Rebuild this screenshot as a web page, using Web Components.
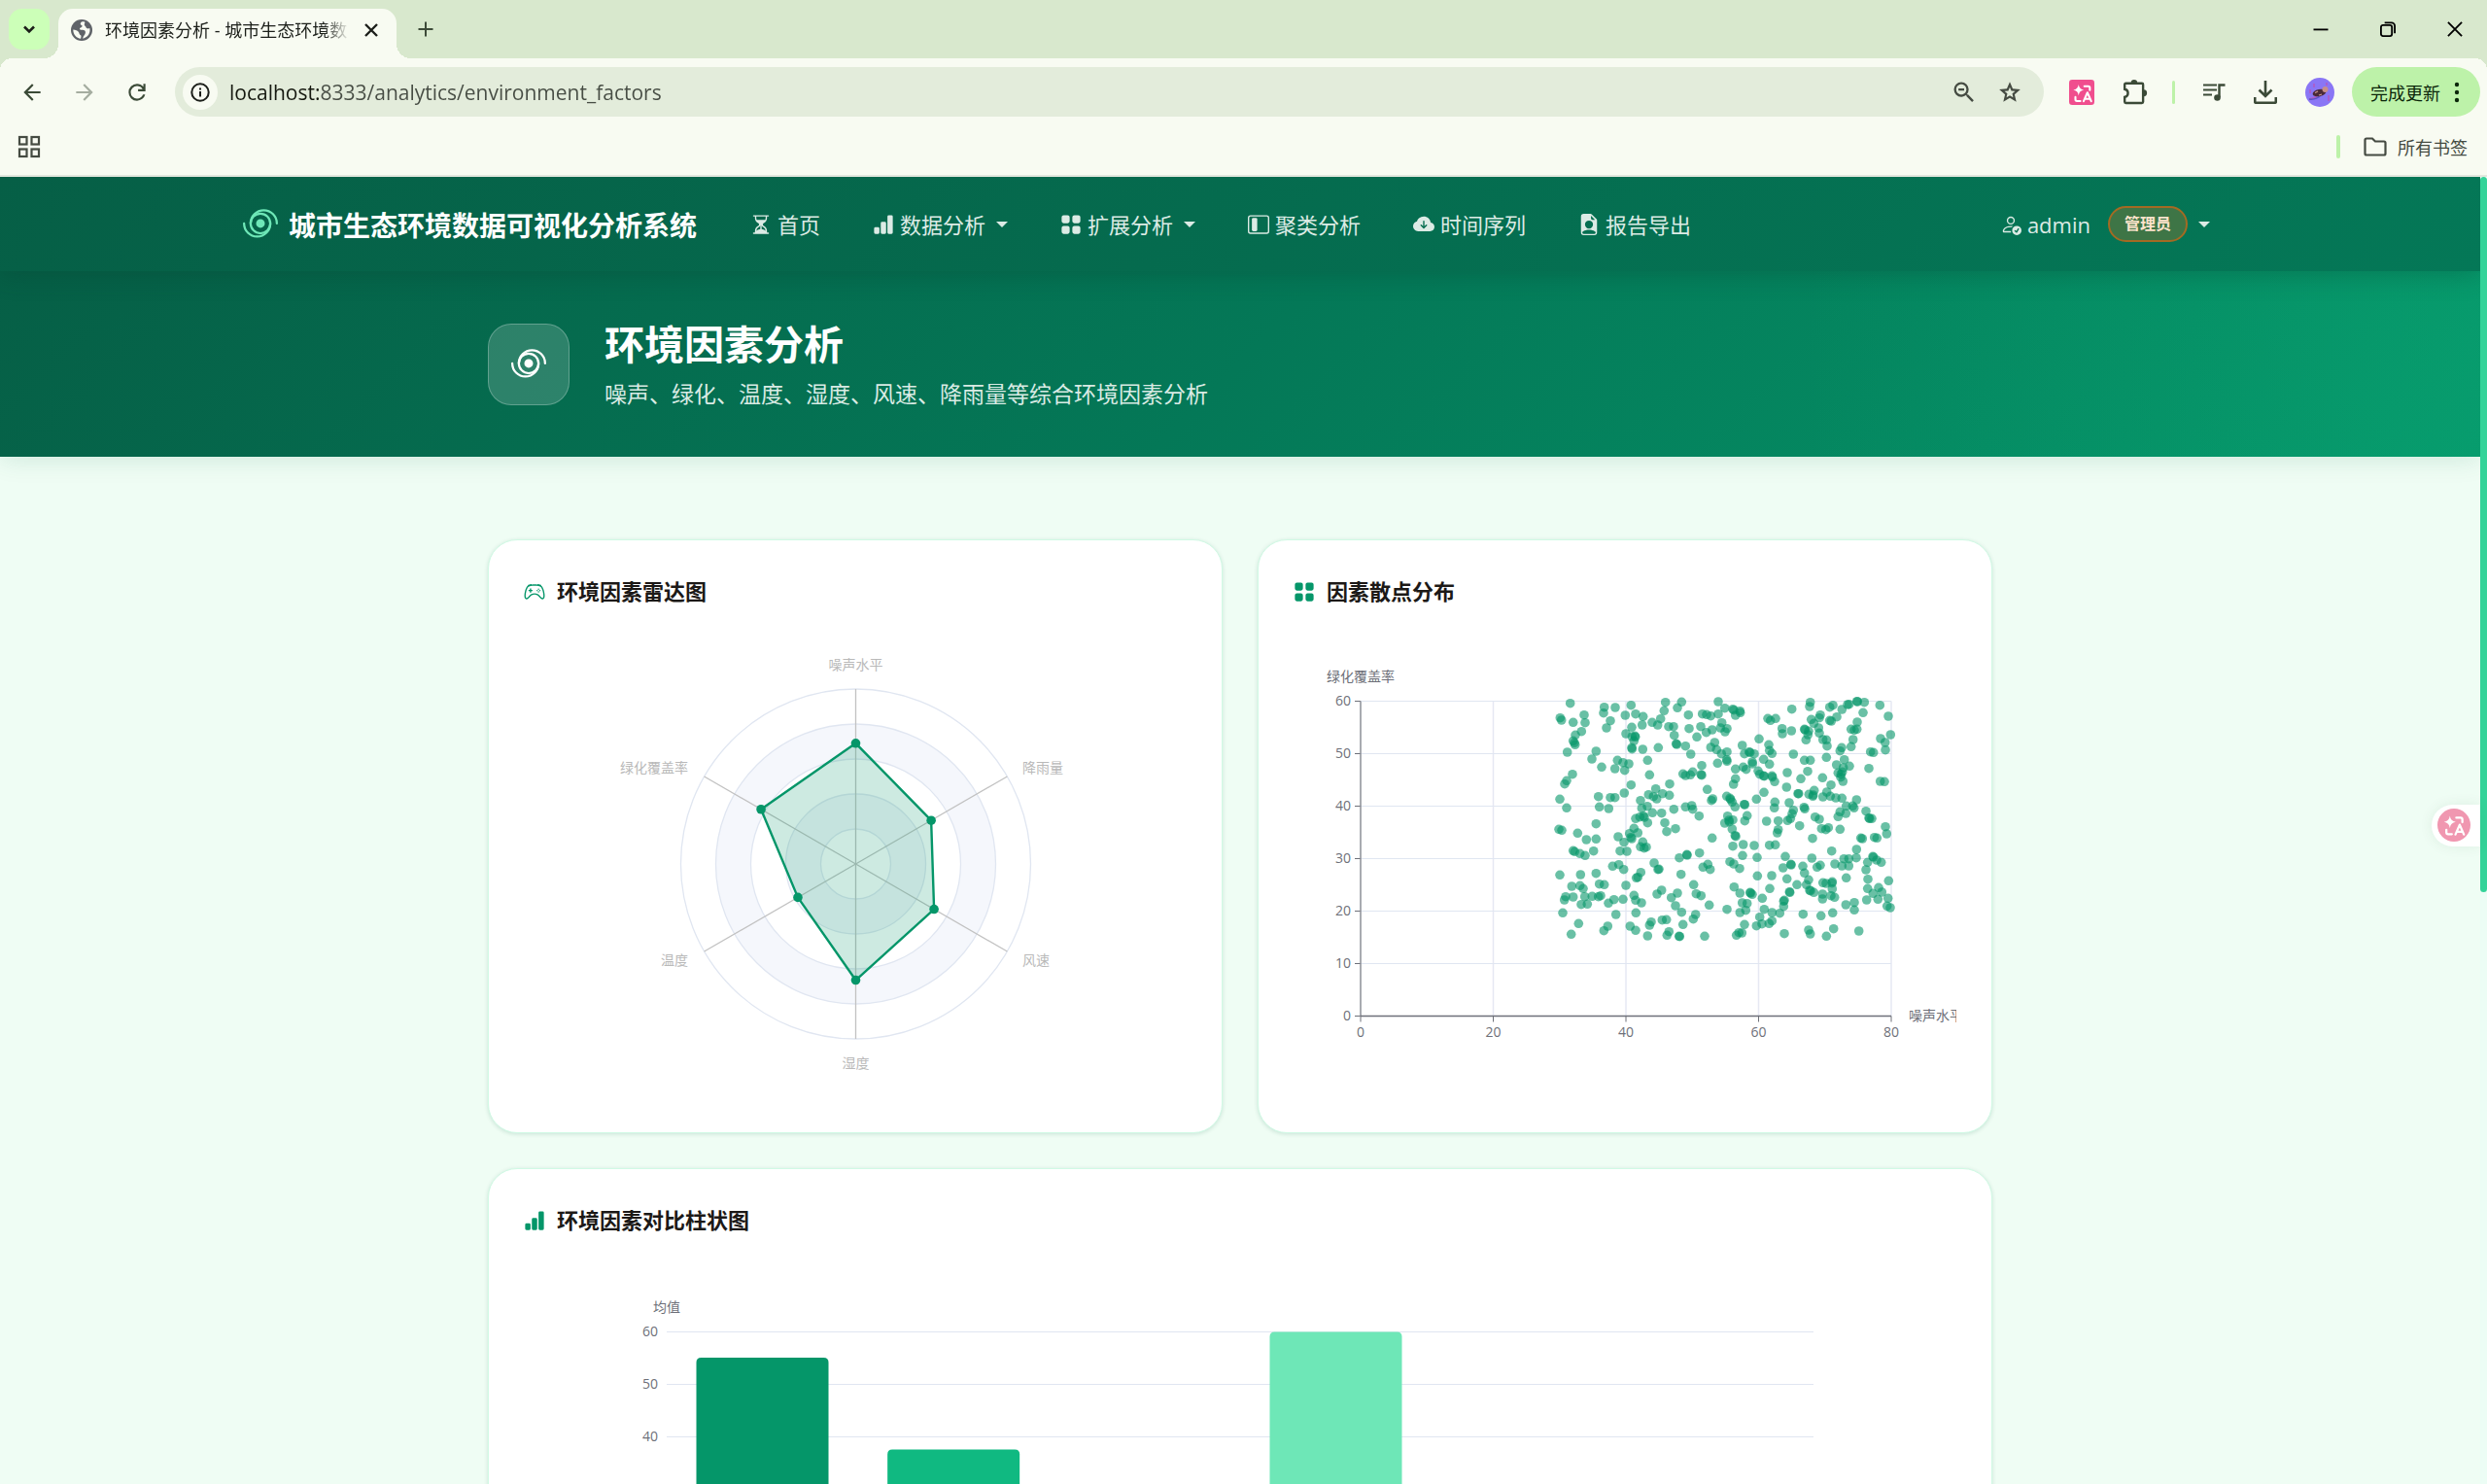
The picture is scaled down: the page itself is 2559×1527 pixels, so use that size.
<!DOCTYPE html>
<html lang="zh-CN">
<head>
<meta charset="utf-8">
<title>环境因素分析 - 城市生态环境数据可视化分析系统</title>
<style>
html,body{margin:0;height:100%}
body{font-family:"Open Sans","Noto Sans CJK SC",sans-serif;overflow:hidden;background:#f8fbf2}
</style>
</head>
<body>
<browser-window>
  <tab-strip slot="chrome"></tab-strip>
  <tool-bar slot="chrome"></tool-bar>
  <bookmark-bar slot="chrome"></bookmark-bar>

  <site-nav brand="城市生态环境数据可视化分析系统">
    <nav-item icon="hourglass">首页</nav-item>
    <nav-item icon="bars" menu>数据分析</nav-item>
    <nav-item icon="grid" menu>扩展分析</nav-item>
    <nav-item icon="sidebar">聚类分析</nav-item>
    <nav-item icon="cloud">时间序列</nav-item>
    <nav-item icon="report">报告导出</nav-item>
    <user-menu slot="user" role-name="管理员">admin</user-menu>
  </site-nav>
  <page-hero icon="hurricane">
    <span slot="title">环境因素分析</span>
    噪声、绿化、温度、湿度、风速、降雨量等综合环境因素分析
  </page-hero>
  <card-grid>
    <chart-card icon="controller"><span slot="title">环境因素雷达图</span><radar-chart></radar-chart></chart-card>
    <chart-card icon="grid"><span slot="title">因素散点分布</span><scatter-chart></scatter-chart></chart-card>
    <chart-card icon="bars" wide><span slot="title">环境因素对比柱状图</span><bar-chart></bar-chart></chart-card>
  </card-grid>
</browser-window>

<script>
const bi = d => `<svg viewBox="0 0 16 16" fill="currentColor">${d.map(p => `<path d="${p}"/>`).join('')}</svg>`;
const md = (d) => `<svg viewBox="0 0 24 24" fill="currentColor"><path d="${d}"/></svg>`;
const line = (inner, w = 2, box = 24) => `<svg viewBox="0 0 ${box} ${box}" fill="none" stroke="currentColor" stroke-width="${w}">${inner}</svg>`;
const translateMark = `<path d="M9 4.5Q9.6 9 14 9.800Q9.600 10.600 9 15Q8.400 10.600 4 9.800Q8.400 9 9 4.500Z" fill="#fff"/><g fill="none" stroke="#fff" stroke-width="1.900" stroke-linecap="round" stroke-linejoin="round"><path d="M14.500 6.200h3.700a1.500 1.500 0 0 1 1.500 1.500v2.300M6 16.500v2.300a1.500 1.500 0 0 0 1.500 1.500h3.200M13.800 20.500l3.600-8.300 3.600 8.300M15 18.300h4.800"/></g>`;
const ICONS = {
  hurricane: `<svg viewBox="0 0 16 16" fill="none" stroke="currentColor" stroke-linecap="round"><circle cx="8" cy="7.500" r="4.500"/><path d="M3.500 7.500a6 6 0 0 1 12 0M12.500 7.500a6 6 0 0 1-12 0"/><circle cx="8" cy="7.500" r="2" fill="currentColor" stroke="none"/></svg>`,
  hourglass: bi(['M2.5 15a.5.5 0 1 1 0-1h1v-1a4.5 4.5 0 0 1 2.557-4.06c.29-.139.443-.377.443-.59v-.7c0-.213-.154-.451-.443-.59A4.5 4.5 0 0 1 3.5 3V2h-1a.5.5 0 0 1 0-1h11a.5.5 0 0 1 0 1h-1v1a4.5 4.5 0 0 1-2.557 4.06c-.29.139-.443.377-.443.59v.7c0 .213.154.451.443.59A4.5 4.5 0 0 1 12.5 13v1h1a.5.5 0 0 1 0 1zm2-13v1c0 .537.12 1.045.337 1.5h6.326c.216-.455.337-.963.337-1.5V2zm3 6.35c0 .701-.478 1.236-1.011 1.492A3.5 3.5 0 0 0 4.5 13s.866-1.299 3-1.48zm1 0v3.17c2.134.181 3 1.48 3 1.48a3.5 3.5 0 0 0-1.989-3.158C8.978 9.586 8.5 9.052 8.5 8.351z']),
  bars: bi(['M1 11a1 1 0 0 1 1-1h2a1 1 0 0 1 1 1v3a1 1 0 0 1-1 1H2a1 1 0 0 1-1-1zm5-4a1 1 0 0 1 1-1h2a1 1 0 0 1 1 1v7a1 1 0 0 1-1 1H7a1 1 0 0 1-1-1zm5-5a1 1 0 0 1 1-1h2a1 1 0 0 1 1 1v12a1 1 0 0 1-1 1h-2a1 1 0 0 1-1-1z']),
  grid: bi(['M1 2.5A1.5 1.5 0 0 1 2.5 1h3A1.5 1.5 0 0 1 7 2.5v3A1.5 1.5 0 0 1 5.5 7h-3A1.5 1.5 0 0 1 1 5.5zm8 0A1.5 1.5 0 0 1 10.5 1h3A1.5 1.5 0 0 1 15 2.5v3A1.5 1.5 0 0 1 13.5 7h-3A1.5 1.5 0 0 1 9 5.5zm-8 8A1.5 1.5 0 0 1 2.5 9h3A1.5 1.5 0 0 1 7 10.5v3A1.5 1.5 0 0 1 5.5 15h-3A1.5 1.5 0 0 1 1 13.5zm8 0A1.5 1.5 0 0 1 10.5 9h3a1.5 1.5 0 0 1 1.5 1.5v3a1.5 1.5 0 0 1-1.5 1.5h-3A1.5 1.5 0 0 1 9 13.5z']),
  sidebar: bi(['M14 2a1 1 0 0 1 1 1v10a1 1 0 0 1-1 1H2a1 1 0 0 1-1-1V3a1 1 0 0 1 1-1zM2 1a2 2 0 0 0-2 2v10a2 2 0 0 0 2 2h12a2 2 0 0 0 2-2V3a2 2 0 0 0-2-2z', 'M3 4a1 1 0 0 1 1-1h2a1 1 0 0 1 1 1v8a1 1 0 0 1-1 1H4a1 1 0 0 1-1-1z']),
  cloud: bi(['M8 2a5.53 5.53 0 0 0-3.594 1.342c-.766.66-1.321 1.52-1.464 2.383C1.266 6.095 0 7.555 0 9.318 0 11.366 1.708 13 3.781 13h8.906C14.502 13 16 11.57 16 9.773c0-1.636-1.242-2.969-2.834-3.194C12.923 3.999 10.69 2 8 2m2.354 6.854-2 2a.5.5 0 0 1-.708 0l-2-2a.5.5 0 1 1 .708-.708L7.5 9.293V5.5a.5.5 0 0 1 1 0v3.793l1.146-1.147a.5.5 0 0 1 .708.708']),
  report: bi(['M9.293 0H4a2 2 0 0 0-2 2v12a2 2 0 0 0 2 2h8a2 2 0 0 0 2-2V4.707A1 1 0 0 0 13.707 4L10 .293A1 1 0 0 0 9.293 0M9.5 3.5v-2l3 3h-2a1 1 0 0 1-1-1M11 8a3 3 0 1 1-6 0 3 3 0 0 1 6 0m2 5.755V14a1 1 0 0 1-1 1H4a1 1 0 0 1-1-1v-.245S4 12 8 12s5 1.755 5 1.755']),
  person: bi(['M12.5 16a3.5 3.5 0 1 0 0-7 3.5 3.5 0 0 0 0 7m1.679-4.493-1.335 2.226a.75.75 0 0 1-1.174.144l-.774-.773a.5.5 0 0 1 .708-.708l.547.548 1.17-1.951a.5.5 0 1 1 .858.514M11 5a3 3 0 1 1-6 0 3 3 0 0 1 6 0M8 7a2 2 0 1 0 0-4 2 2 0 0 0 0 4', 'M8.256 14a4.5 4.5 0 0 1-.229-1.004H3c.001-.246.154-.986.832-1.664C4.484 10.68 5.711 10 8 10q.39 0 .74.025c.226-.341.496-.65.804-.918Q8.844 9.002 8 9c-5 0-6 3-6 4s1 1 1 1z']),
  controller: bi(['M11.5 6.027a.5.5 0 1 1-1 0 .5.5 0 0 1 1 0m-1.5 1.5a.5.5 0 1 0 0-1 .5.5 0 0 0 0 1m2.5-.5a.5.5 0 1 1-1 0 .5.5 0 0 1 1 0m-1.5 1.5a.5.5 0 1 0 0-1 .5.5 0 0 0 0 1m-6.5-3h1v1h1v1h-1v1h-1v-1h-1v-1h1z', 'M3.051 3.26a.5.5 0 0 1 .354-.613l1.932-.518a.5.5 0 0 1 .62.39c.655-.079 1.35-.117 2.043-.117.72 0 1.443.041 2.12.126a.5.5 0 0 1 .622-.399l1.932.518a.5.5 0 0 1 .306.729q.211.136.373.297c.408.408.78 1.05 1.095 1.772.32.733.599 1.591.805 2.466s.34 1.78.364 2.606c.024.816-.059 1.602-.328 2.21a1.42 1.42 0 0 1-1.445.83c-.636-.067-1.115-.394-1.513-.773-.245-.232-.496-.526-.739-.808-.126-.148-.25-.292-.368-.423-.728-.804-1.597-1.527-3.224-1.527s-2.496.723-3.224 1.527c-.119.131-.242.275-.368.423-.243.282-.494.575-.739.808-.398.38-.877.706-1.513.773a1.42 1.42 0 0 1-1.445-.83c-.27-.608-.352-1.395-.329-2.21.024-.826.16-1.73.365-2.606.206-.875.486-1.733.805-2.466.315-.722.687-1.364 1.094-1.772a2.3 2.3 0 0 1 .433-.335zm2.036.412c-.877.185-1.469.443-1.733.708-.276.276-.587.783-.885 1.465a14 14 0 0 0-.748 2.295 12.4 12.4 0 0 0-.339 2.406c-.022.755.062 1.368.243 1.776a.42.42 0 0 0 .426.24c.327-.034.61-.199.929-.502.212-.202.4-.423.615-.674.133-.156.276-.323.44-.504C4.861 9.969 5.978 9.027 8 9.027s3.139.942 3.965 1.855c.164.181.307.348.44.504.214.251.403.472.615.674.318.303.601.468.929.503a.42.42 0 0 0 .426-.241c.18-.408.265-1.02.243-1.776a12.4 12.4 0 0 0-.339-2.406 14 14 0 0 0-.748-2.295c-.298-.682-.61-1.19-.885-1.465-.264-.265-.856-.523-1.733-.708-.85-.179-1.877-.27-2.913-.27s-2.063.091-2.913.27']),
  chevron: line('<path d="M7 9.500l5 5 5-5"/>', 2.6),
  globe: `<svg viewBox="0 0 24 24"><circle cx="12" cy="12" r="11" fill="#5f6368"/><path fill="#f8fbf2" d="M12.500 3.200c-2 1-2.300 2.800-1 3.600 1.800.4 1.200 2.200-.5 2.600-1.800.6-1 2.600 1.200 2.300 3-.2 4.400 1.400 3.500 3.800-.6 1.800-2.200 2.600-2.500 5.200 4-.6 7.300-4.200 7.300-8.600 0-.8-.1-1.400-.3-2.100-1.400.8-3.200.6-3.700-1-.4-1.600-1.500-1-1.700-2.600-.1-1.400 1-2 .4-2.900-.8-.3-1.700-.4-2.700-.3zM3.300 11.500c2.200.3 4.700.8 5.800 2.800.6 1.300.6 2.400 1.900 2.900.9.500.4 2.200.1 3.500-4.500-.4-7.900-4.300-7.800-9.200z"/></svg>`,
  close: line('<path d="M6 6l12 12M18 6L6 18"/>', 2.4),
  plus: line('<path d="M12 3v18M3 12h18"/>', 2.4),
  min: line('<path d="M3 12.500h18"/>', 2.2),
  restore: line('<rect x="3.500" y="7" width="13.500" height="13.500" rx="2.500"/><path d="M8 4h8.500a4 4 0 0 1 4 4V17"/>', 2.2),
  shut: line('<path d="M3.500 3.500l17 17M20.500 3.500l-17 17"/>', 2.2),
  back: md('M20 11H7.830l5.590-5.590L12 4l-8 8 8 8 1.410-1.410L7.830 13H20z'),
  forward: md('M4 11h12.170l-5.590-5.590L12 4l8 8-8 8-1.410-1.410L16.170 13H4z'),
  reload: md('M12 20q-3.350 0-5.675-2.325T4 12t2.325-5.675T12 4q1.725 0 3.300.713T18 6.750V4h2v7h-7V9h4.200q-.8-1.400-2.188-2.200T12 6Q9.500 6 7.750 7.750T6 12t1.750 4.250T12 18q1.925 0 3.475-1.100T17.650 14h2.100q-.7 2.650-2.850 4.325T12 20'),
  info: line('<circle cx="12" cy="12" r="9.500"/><path d="M12 11v6M12 7v2.200"/>', 2.2),
  zoomout: md('M15.5 14h-.79l-.28-.27A6.47 6.47 0 0 0 16 9.5 6.5 6.5 0 1 0 9.5 16c1.61 0 3.09-.59 4.23-1.57l.27.28v.79l5 4.990L20.490 19zm-6 0C7.010 14 5 11.990 5 9.500S7.010 5 9.500 5 14 7.010 14 9.500 11.990 14 9.500 14M7 8.600h5v1.800H7z'),
  star: md('m8.850 16.825 3.150-1.900 3.150 1.925-.825-3.600 2.775-2.400-3.650-.325-1.450-3.400-1.450 3.375-3.650.325 2.775 2.425zM5.825 21l1.625-7.025L2 9.250l7.200-.625L12 2l2.800 6.625 7.200.625-5.450 4.725L18.175 21 12 17.275z'),
  puzzle: `<svg viewBox="0 0 24 24"><path d="M3 3.500h15.500a1 1 0 0 1 1 1V21a1.200 1.200 0 0 1-1.200 1.200H3.200A1.200 1.200 0 0 1 2 21v-4.500c4.200-.7 4.200-6.800 0-7.500V4.500a1 1 0 0 1 1-1z" fill="none" stroke="currentColor" stroke-width="2.200"/><path d="M8 3a3 3 0 0 1 6 0zM20 9.500a3.200 3.200 0 0 1 0 6.400z" fill="currentColor"/></svg>`,
  playlist: `<svg viewBox="0 0 24 24"><path d="M1 4.500h14M1 9.500h14M1 14.500h9" stroke="currentColor" stroke-width="2.200"/><path d="M17.500 17V4.500h6" stroke="currentColor" stroke-width="2.400" fill="none"/><circle cx="15.500" cy="17.500" r="3.300" fill="currentColor"/></svg>`,
  download: line('<path d="M12 0v15M5.500 9.500L12 16l6.500-6.500M1.200 17v4.500a1.300 1.300 0 0 0 1.300 1.300h19a1.300 1.300 0 0 0 1.300-1.300V17"/>', 2.6),
  dots: `<svg viewBox="0 0 24 24" fill="currentColor"><circle cx="12" cy="4" r="2.200"/><circle cx="12" cy="12" r="2.200"/><circle cx="12" cy="20" r="2.200"/></svg>`,
  apps: line('<rect x="2" y="2" width="7.500" height="7.500"/><rect x="14.500" y="2" width="7.500" height="7.500"/><rect x="2" y="14.500" width="7.500" height="7.500"/><rect x="14.500" y="14.500" width="7.500" height="7.500"/>', 2.200),
  folder: line('<path d="M1.500 19V5a1.500 1.500 0 0 1 1.500-1.500h6l3 3h9A1.500 1.500 0 0 1 22.500 8v11a1.500 1.500 0 0 1-1.500 1.500H3A1.500 1.500 0 0 1 1.500 19z"/>', 2.2),
  translate: `<svg viewBox="0 0 24 24"><rect width="24" height="24" rx="3" fill="#f04e8e"/>${translateMark}</svg>`,
  bubble: `<svg viewBox="0 0 34 34"><circle cx="17" cy="17" r="17" fill="#f097b0"/><g transform="translate(2 2) scale(1.200)">${translateMark}</g></svg>`,
  avatar: `<svg viewBox="0 0 30 30"><circle cx="15" cy="15" r="15" fill="#8a76f5"/><path d="M4 22q8-1 14-9M9 6v4M24 18v6M5 12v4M22 5v3" stroke="#b45ac0" stroke-width="1.500" fill="none"/><path d="M4 22q7 1 12-4" stroke="#5b56c4" stroke-width="1.500" fill="none"/><ellipse cx="14.500" cy="15.500" rx="7" ry="3.600" transform="rotate(-12 14.500 15.500)" fill="#4a2a38"/><circle cx="20.500" cy="12" r="3" fill="#c98f8a"/><path d="M10 15.500l3-1.500M14 18l3-1" stroke="#d09a90" stroke-width="1.200"/></svg>`
};

/* Base class: every element renders its template into an open shadow root. */
class Base extends HTMLElement {
  connectedCallback() {
    if (this.shadowRoot) return;
    const t = document.createElement('template');
    t.innerHTML = this.render();
    this.attachShadow({ mode: 'open' }).append(t.content.cloneNode(true));
  }
}
const RESET = `:host,*{box-sizing:border-box}button,input{font:inherit;color:inherit;background:none;border:0;padding:0;margin:0}a{color:inherit;text-decoration:none}`;

customElements.define('app-icon', class extends Base {
  render() {
    const s = this.getAttribute('size') || 24;
    return `<style>:host{display:block;flex:none;width:${s}px;height:${s}px}svg{display:block;width:100%;height:100%}</style>${ICONS[this.getAttribute('name')]}`;
  }
});

customElements.define('browser-window', class extends Base {
  render() {
    return `<style>${RESET}
    :host{display:flex;flex-direction:column;height:100vh}
    .viewport{flex:1;min-height:0;display:flex;position:relative;background:#effdf4}
    .page{flex:1;min-width:0;overflow:hidden}
    .track{width:7px;background:#ecfdf5}
    .thumb{height:736px;border-radius:4px;background:#34d399}
    .float{position:absolute;right:7px;top:646px;padding:4px 10px 5px 6px;background:#fff;border-radius:22px 0 0 22px;box-shadow:0 0 14px rgba(0,80,40,.08)}
    </style><slot name="chrome"></slot>
    <div class="viewport"><div class="page"><slot></slot></div><div class="track"><div class="thumb"></div></div>
    <button class="float" aria-label="翻译"><app-icon name="bubble" size="34"></app-icon></button></div>`;
  }
});

customElements.define('tab-strip', class extends Base {
  render() {
    return `<style>${RESET}
    :host{display:flex;height:60px;background:#d8e8cd;color:#1c1f1a;align-items:flex-end}
    .search{width:42px;height:42px;margin:0 9px 9px;border-radius:14px;background:#ccffb8;display:grid;place-items:center}
    .tab{position:relative;display:flex;align-items:center;width:348px;height:51px;padding:0 14px 7px 12px;background:#f8fbf2;border-radius:15px 15px 0 0}
    .tab::before,.tab::after{content:"";position:absolute;bottom:0;width:15px;height:15px}
    .tab::before{left:-15px;background:radial-gradient(circle at 0 0,transparent 15px,#f8fbf2 15px)}
    .tab::after{right:-15px;background:radial-gradient(circle at 100% 0,transparent 15px,#f8fbf2 15px)}
    .title{flex:1;margin:0 12px 0 12px;font-size:18px;line-height:26px;white-space:nowrap;overflow:hidden;mask-image:linear-gradient(90deg,#000 225px,transparent 252px)}
    .new{margin:0 0 20px 20px;color:#3d4b39}
    .win{margin-left:auto;display:flex;gap:49px;padding:0 23px 20px 0;color:#000}
    button{display:block}
    </style>
    <button class="search" aria-label="搜索标签页"><app-icon name="chevron" size="24"></app-icon></button>
    <div class="tab"><app-icon name="globe" size="24"></app-icon><span class="title">环境因素分析 - 城市生态环境数</span><button aria-label="关闭"><app-icon name="close" size="24"></app-icon></button></div>
    <button class="new" aria-label="新标签页"><app-icon name="plus" size="20"></app-icon></button>
    <div class="win"><button aria-label="最小化"><app-icon name="min" size="20"></app-icon></button><button aria-label="还原"><app-icon name="restore" size="20"></app-icon></button><button aria-label="关闭窗口"><app-icon name="shut" size="20"></app-icon></button></div>`;
  }
});

customElements.define('tool-bar', class extends Base {
  render() {
    return `<style>${RESET}
    :host{display:flex;align-items:center;height:69px;padding:0 7px 0 20px;background:#f8fbf2;color:#3b4a37;
      background:radial-gradient(circle at 12px 12px,#f8fbf2 12px,#d8e8cd 12px) 0 0/12px 12px no-repeat,radial-gradient(circle at 0 12px,#f8fbf2 12px,#d8e8cd 12px) 100% 0/12px 12px no-repeat,#f8fbf2}
    button{display:block}
    .nav{display:flex;gap:28px}.off{color:#a5ada0}
    .box{flex:1;display:flex;align-items:center;height:51px;margin:0 26px;padding:0 22px 0 8px;border-radius:26px;background:#e3ecdb;color:#454b42}
    .info{width:36px;height:36px;border-radius:50%;background:#f8fbf2;color:#1c1f1a;display:grid;place-items:center}
    input{flex:1;margin:0 12px;font-size:21px;line-height:30px;outline:0;background:linear-gradient(90deg,#15180f 92px,#474d44 92px);-webkit-background-clip:text;background-clip:text;-webkit-text-fill-color:transparent}
    .acts{display:flex;gap:20px}
    .sep{width:3px;height:24px;margin:0 28px 0 25px;border-radius:2px;background:#bdf2a9}
    .tools{display:flex;align-items:center;gap:29px}
    .up{display:flex;align-items:center;gap:5px;height:51px;margin-left:18px;padding:0 12px 0 19px;border-radius:26px;background:#bdf2a9;color:#0b260a;font-size:18px}
    </style>
    <div class="nav"><button aria-label="后退"><app-icon name="back" size="26"></app-icon></button><button class="off" aria-label="前进"><app-icon name="forward" size="26"></app-icon></button><button aria-label="重新加载"><app-icon name="reload" size="26"></app-icon></button></div>
    <div class="box"><button class="info" aria-label="网站信息"><app-icon name="info" size="22"></app-icon></button>
      <input aria-label="地址栏" value="localhost:8333/analytics/environment_factors">
      <div class="acts"><button aria-label="缩放"><app-icon name="zoomout" size="28"></app-icon></button><button aria-label="收藏"><app-icon name="star" size="26"></app-icon></button></div></div>
    <div class="tools"><button aria-label="沉浸式翻译"><app-icon name="translate" size="26"></app-icon></button><button aria-label="扩展程序"><app-icon name="puzzle" size="26"></app-icon></button></div><span class="sep"></span>
    <div class="tools"><button aria-label="媒体"><app-icon name="playlist" size="24"></app-icon></button><button aria-label="下载"><app-icon name="download" size="24"></app-icon></button><button aria-label="个人资料"><app-icon name="avatar" size="30"></app-icon></button></div>
    <button class="up">完成更新<app-icon name="dots" size="24"></app-icon></button>`;
  }
});

customElements.define('bookmark-bar', class extends Base {
  render() {
    return `<style>${RESET}
    :host{display:flex;align-items:center;height:53px;padding:0 20px 7px 18px;background:#f8fbf2;border-bottom:2px solid #e3e7de;color:#454b42;font-size:18px}
    .all{display:flex;align-items:center;gap:11px;margin-left:24px}.sep{width:4px;height:24px;border-radius:2px;background:#bdf2a9;margin-left:auto}
    </style><button aria-label="应用"><app-icon name="apps" size="24"></app-icon></button><span class="sep"></span><button class="all"><app-icon name="folder" size="24"></app-icon>所有书签</button>`;
  }
});

customElements.define('site-nav', class extends Base {
  render() {
    return `<style>${RESET}
    :host{display:block;position:relative;z-index:1;background:linear-gradient(135deg,#065f46,#047857);box-shadow:0 4px 24px rgba(6,60,46,.3);color:#dcebe5}
    nav{display:flex;align-items:center;max-width:2052px;height:97px;margin:0 auto;padding-right:28px}
    .brand{display:flex;align-items:center;gap:11px;font-size:28px;font-weight:700;color:#fff;margin-right:55px}
    .brand app-icon{color:#6ee7b7}
    .items{display:flex;gap:54px;flex:1}
    </style><nav><a class="brand" href="#"><app-icon name="hurricane" size="36"></app-icon>${this.getAttribute('brand')}</a><div class="items"><slot></slot></div><slot name="user"></slot></nav>`;
  }
});

const CARET = `.caret{border:6px solid transparent;border-top-color:currentColor;border-bottom:0}`;
customElements.define('nav-item', class extends Base {
  render() {
    return `<style>${RESET}:host{display:block}a{display:flex;align-items:center;font-size:22px;line-height:30px;white-space:nowrap}app-icon{margin-right:6px}${CARET}.caret{margin-left:11px}</style>
    <a href="#"><app-icon name="${this.getAttribute('icon')}" size="22"></app-icon><slot></slot>${this.hasAttribute('menu') ? '<span class="caret"></span>' : ''}</a>`;
  }
});

customElements.define('user-menu', class extends Base {
  render() {
    return `<style>${RESET}:host{display:block}button{display:flex;align-items:center;font-size:22px;line-height:30px}app-icon{margin-right:6px}${CARET}
    .role{margin:0 11px 0 18px;padding:0 15px;border:2px solid #a36a23;border-radius:19px;background:#3e7546;color:#fde3cb;font-size:16px;font-weight:700;line-height:33px}</style>
    <button><app-icon name="person" size="22"></app-icon><slot></slot><span class="role">${this.getAttribute('role-name')}</span><span class="caret"></span></button>`;
  }
});

customElements.define('page-hero', class extends Base {
  render() {
    return `<style>${RESET}
    :host{display:block;background:radial-gradient(circle at 100% 40%,rgba(16,185,129,.22),transparent 700px),linear-gradient(135deg,#065f46 0%,#047857 50%,#059669 100%);box-shadow:0 4px 24px rgba(6,95,70,.12)}
    .in{display:flex;align-items:center;gap:36px;max-width:1548px;height:191px;margin:0 auto}
    .ic{display:grid;place-items:center;width:84px;height:84px;border-radius:24px;border:1px solid rgba(255,255,255,.25);background:rgba(255,255,255,.16);color:#fff}
    h1{margin:0 0 7px;font-size:41px;line-height:54px;font-weight:700;color:#fff}
    p{margin:0;font-size:23px;line-height:34px;color:#d9ebe4}
    </style><div class="in"><div class="ic"><app-icon name="${this.getAttribute('icon')}" size="36"></app-icon></div><div><h1><slot name="title"></slot></h1><p><slot></slot></p></div></div>`;
  }
});

customElements.define('card-grid', class extends Base {
  render() {
    return `<style>:host{display:grid;grid-template-columns:1fr 1fr;gap:36px;max-width:1548px;margin:0 auto;padding:85px 0}::slotted([wide]){grid-column:1/-1}</style><slot></slot>`;
  }
});

customElements.define('chart-card', class extends Base {
  render() {
    return `<style>${RESET}
    :host{display:block;min-width:0;padding:36px;border:1px solid #d1fae5;border-radius:30px;background:#fff;box-shadow:0 1px 4px rgba(6,95,70,.16)}
    h2{display:flex;align-items:center;gap:12px;margin:0 0 24px;font-size:22px;line-height:33px;font-weight:700;color:#1c1917}
    app-icon{color:#059669}
    </style><h2><app-icon name="${this.getAttribute('icon')}" size="22"></app-icon><slot name="title"></slot></h2><slot></slot>`;
  }
});

const CHART = `:host{display:block}svg{display:block;width:100%;overflow:hidden}text{font-family:"Open Sans","Noto Sans CJK SC",sans-serif;font-size:14px;fill:#6e7079;dominant-baseline:central}`;
const txt = (x, y, s, anchor = 'middle') => `<text x="${x}" y="${y}" text-anchor="${anchor}">${s}</text>`;

customElements.define('radar-chart', class extends Base {
  render() {
    const cx = 341.5, cy = 240, R = 180;
    // Share of the full radius, starting at the top and going anticlockwise.
    const axes = [['噪声水平', .69], ['绿化覆盖率', .625], ['温度', .382], ['湿度', .664], ['风速', .517], ['降雨量', .498]];
    const at = (i, r) => { const a = -Math.PI / 2 - i * Math.PI / 3; return [cx + r * Math.cos(a), cy + r * Math.sin(a)]; };
    let s = '';
    for (let k = 5; k > 0; k--) s += `<circle cx="${cx}" cy="${cy}" r="${k * 36}" fill="${k % 2 ? '#fff' : '#f5f7fc'}" stroke="#e0e6f1" stroke-width="1.300"/>`;
    axes.forEach((_, i) => { const [x, y] = at(i, R); s += `<path d="M${cx} ${cy}L${x} ${y}" stroke="#c2c2c2" stroke-width="1.300"/>`; });
    const pts = axes.map((a, i) => at(i, R * a[1]));
    s += `<polygon points="${pts.join(' ')}" fill="#059669" fill-opacity=".2" stroke="#059669" stroke-width="2.400" stroke-linejoin="bevel"/>`;
    pts.forEach(p => s += `<circle cx="${p[0]}" cy="${p[1]}" r="4.800" fill="#059669"/>`);
    const spots = [[cx, 34, 'middle'], [169, 140, 'end'], [169, 338, 'end'], [cx, 444, 'middle'], [513, 338, 'start'], [513, 140, 'start']];
    axes.forEach((a, i) => s += txt(spots[i][0], spots[i][1], a[0], spots[i][2]));
    return `<style>${CHART}text{fill:#b9b9b9}</style><svg viewBox="0 0 682 480">${s}</svg>`;
  }
});

// Sample positions in thirds of a pixel, measured from the corner of the sampled area.
const SAMPLES = `107,71 212,83 246,84 295,77 401,68 451,67 438,85 564,66 584,86 791,89 848,68 846,81 908,83 918,77 946,90 963,75 968,74 992,65 994,66 1015,68 1063,77 1089,111 1011,100
76,116 80,123 116,130 150,107 153,131 210,101 231,125 219,147 277,108 309,104 332,112 329,138 360,130 377,138 386,119 397,94 411,143 426,143 472,107 474,149 515,104 528,106 541,110 564,104 609,89 612,92 617,108 631,95 632,100 575,131 571,147 591,149 585,159 510,143 527,161 545,153 498,175 428,170 717,118 725,124 741,118 761,149 762,165 790,156 690,181 851,121 879,107 876,116 859,133 830,151 832,153 843,157 841,168 835,184 874,147 876,163 908,124 913,126 930,113 993,129 974,151 984,154 992,151 980,183 1065,180 1096,168 1079,192 1080,215
142,158 123,169 116,187 120,193 122,199 98,222 187,219 174,243 204,268 279,165 297,145 298,174 307,172 308,175 304,187 297,208 298,212 331,213 379,208 434,196 436,198 463,203 479,228 541,207 553,192 559,214 574,227 591,221 590,245 591,250 562,256 638,201 645,227 659,221 662,223 675,227 704,244 669,252 670,258 722,259 720,199 722,217 730,226 796,228 830,247 848,247 887,183 898,184 900,203 898,238 940,218 945,208 974,205 1034,221 1043,223
253,247 270,254 288,258 245,273 275,278 346,247 352,292 414,320 114,290 96,310 90,320 295,323 274,348 455,289 463,294 478,292 485,283 513,263 511,291 513,293 530,337 617,274 617,304 611,321 641,268 650,275 687,280 692,290 704,295 706,296 730,295 731,299 738,313 777,285 775,330 819,304 840,281 886,301 912,323 929,261 953,245 969,265 950,270 934,286 943,290 947,283 942,299 949,312 1029,272 1064,312 1077,313
75,367 96,394 194,359 197,391 231,362 245,362 226,396 371,335 392,350 413,355 349,353 364,359 374,366 324,371 345,389 328,395 361,409 389,410 427,398 463,391 482,387 485,398 505,419 543,371 547,366 590,358 600,364 602,368 607,376 616,391 644,383 646,384 682,367 705,346 739,376 737,394 783,378 810,350 812,350 844,352 860,340 857,354 856,358 887,360 899,345 910,358 927,363 946,364 991,369 829,392 831,397 796,401 792,412 959,388 979,388 983,394 940,406 958,411 934,421 1020,404 1029,425 1031,427 1038,427
309,427 322,422 333,419 336,423 346,440 399,440 405,467 432,458 187,443 187,490 72,460 81,463 130,472 157,492 255,483 273,500 290,473 304,457 316,471 294,485 297,489 331,499 324,514 335,518 342,515 545,487 593,419 609,431 597,432 598,437 584,441 607,459 616,479 618,482 609,512 641,507 675,510 653,418 646,434 713,435 749,434 778,433 787,427 749,461 746,471 722,509 740,508 815,449 863,422 876,429 883,458 896,461 904,455 940,460 855,488 914,527 991,522 1004,487 1009,489 1046,485 1054,487 1080,452 1084,474
116,526 121,529 137,535 153,541 179,527 261,527 282,528 444,548 467,538 468,540 506,533 366,564 378,584 381,583 449,599 238,574 257,569 272,584 187,596 139,600 75,601 325,593 311,610 316,608 279,633 517,577 532,568 539,584 600,560 612,567 630,581 639,541 684,547 685,604 729,603 771,544 764,579 788,568 789,570 776,613 825,574 853,549 869,577 879,571 830,595 924,567 952,551 967,551 990,548 946,573 967,573 1025,562 1041,544 1043,546 1053,555 1067,562 1020,585 1026,614 1090,619 959,610
112,636 137,634 147,643 197,629 212,631 93,668 89,678 116,669 152,668 175,667 194,668 201,665 141,692 160,691 84,718 225,688 242,677 270,676 304,664 309,679 327,687 248,723 310,718 375,660 389,648 438,657 419,671 432,696 488,631 496,659 511,665 536,694 451,716 494,723 487,737 455,754 613,638 631,657 662,655 664,657 669,661 700,673 723,643 638,687 653,689 649,710 631,717 591,707 706,707 692,731 730,717 730,743 754,719 768,679 766,682 766,698 784,653 785,655 807,631 836,631 843,616 846,648 849,650 859,655 887,625 897,627 915,626 916,622 916,644 886,660 886,675 912,665 923,670 958,693 984,686 984,709 917,718 881,727 826,722 1025,643 1042,658 1059,640 1069,654 1057,676 1022,678 1088,673 1085,697 1095,702
133,751 110,784 223,759 211,773 292,759 309,772 346,789 357,746 352,756 391,740 404,739 412,776 406,787 443,790 445,791 522,790 645,754 637,780 628,779 620,787 682,758 699,752 721,751 768,782 843,771 848,783 898,790 920,767 998,774`;

customElements.define('scatter-chart', class extends Base {
  render() {
    const L = 69, T = 72.5, W = 546, H = 324, B = T + H;
    let s = '';
    for (let i = 0; i <= 4; i++) {
      const x = L + i * W / 4;
      if (i) s += `<path d="M${x} ${T}V${B}" stroke="#e6e8f3" stroke-width="1.500"/>`;
      s += `<path d="M${x} ${B}v6" stroke="#6e7079"/>` + txt(x, B + 16, i * 20);
    }
    for (let i = 0; i <= 6; i++) {
      const y = B - i * H / 6;
      if (i) s += `<path d="M${L} ${y}H${L + W}" stroke="#e0e6f1"/>`;
      s += `<path d="M${L - 6} ${y}H${L}" stroke="#6e7079"/>` + txt(L - 10, y - 1, i * 10, 'end');
    }
    s += `<path d="M${L} ${T}V${B}" stroke="#8d8f97" stroke-width="1.500"/><path d="M${L} ${B}H${L + W}" stroke="#6e7079" stroke-width="1.300"/>`;
    s += txt(L, 46, '绿化覆盖率') + txt(633, B - 1, '噪声水平', 'start');
    SAMPLES.split(/\s+/).forEach(p => { const [x, y] = p.split(','); s += `<circle cx="${(249 + x / 3).toFixed(1)}" cy="${(51 + y / 3).toFixed(1)}" r="4.800"/>`; });
    return `<style>${CHART}circle{fill:#059669;fill-opacity:.6}</style><svg viewBox="0 0 682 480">${s}</svg>`;
  }
});

customElements.define('bar-chart', class extends Base {
  render() {
    const L = 147, T = 74.5, W = 1180, H = 324, B = T + H, band = W / 6;
    const bars = [[0, 55.1, '#059669'], [1, 37.6, '#10b981'], [3, 60, '#6ee7b7']];
    let s = '';
    for (let i = 0; i <= 6; i++) {
      const y = B - i * H / 6;
      s += `<path d="M${L} ${y}H${L + W}" stroke="#e0e6f1"/>` + txt(L - 9, y - 1, i * 10, 'end');
    }
    s += txt(L, 48, '均值');
    bars.forEach(([i, v, c]) => { const h = v * H / 60; s += `<path d="M${L + i * band + 30.5} ${B}v${5 - h}q0-5 5-5h126q5 0 5 5v${h - 5}z" fill="${c}"/>`; });
    return `<style>${CHART}</style><svg viewBox="0 0 1474 480">${s}</svg>`;
  }
});
</script>
</body>
</html>
